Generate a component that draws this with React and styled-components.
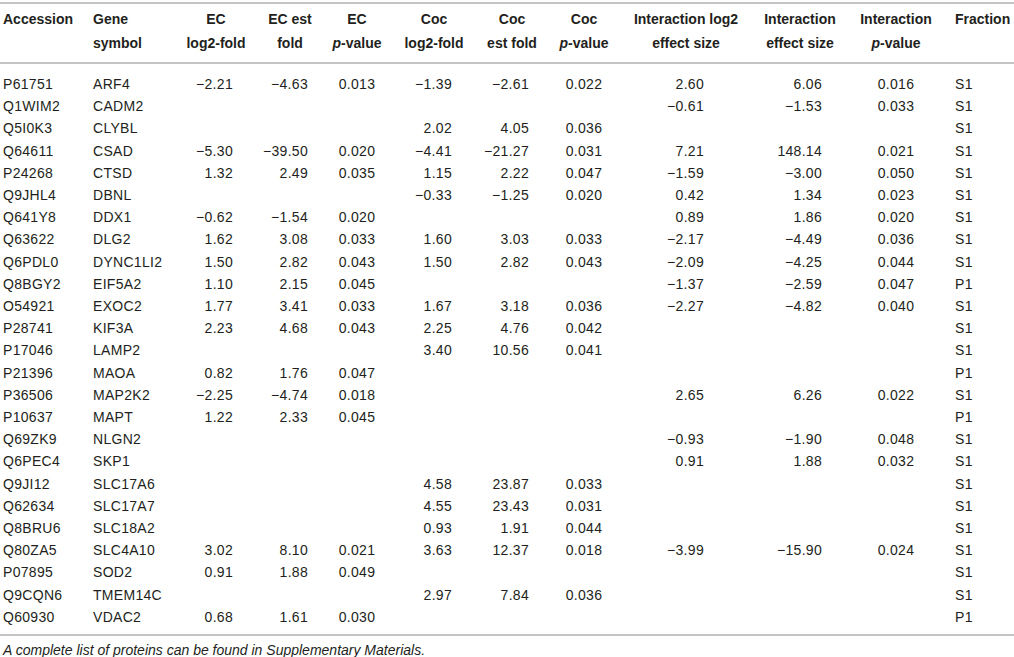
import React from 'react'
import styled, { createGlobalStyle } from 'styled-components'

const GlobalStyle = createGlobalStyle`
  html, body { margin: 0; padding: 0; background: #fff; }
  body { font-family: "Liberation Sans", Arial, sans-serif; color: #231f20; }
`

// width, alignment and padding of every column
const columns = [
  { w: 88, align: 'left', pl: 3 },
  { w: 91, align: 'left', pl: 5 },
  { w: 74, align: 'right', pr: 20 },
  { w: 74, align: 'right', pr: 19 },
  { w: 60, align: 'center' },
  { w: 94, align: 'right', pr: 29 },
  { w: 62, align: 'right', pr: 14 },
  { w: 82, align: 'center' },
  { w: 122, align: 'right', pr: 43 },
  { w: 106, align: 'right', pr: 31 },
  { w: 86, align: 'center' },
  { w: 75, align: 'left', pl: 16 },
]

const P = () => <i>p</i>

const headers = [
  ['Accession'],
  ['Gene', 'symbol'],
  ['EC', 'log2-fold'],
  ['EC est', 'fold'],
  ['EC', <><P />-value</>],
  ['Coc', 'log2-fold'],
  ['Coc', 'est fold'],
  ['Coc', <><P />-value</>],
  ['Interaction log2', 'effect size'],
  ['Interaction', 'effect size'],
  ['Interaction', <><P />-value</>],
  ['Fraction'],
]

const rows = `P61751 ARF4 −2.21 −4.63 0.013 −1.39 −2.61 0.022 2.60 6.06 0.016 S1
Q1WIM2 CADM2 _ _ _ _ _ _ −0.61 −1.53 0.033 S1
Q5I0K3 CLYBL _ _ _ 2.02 4.05 0.036 _ _ _ S1
Q64611 CSAD −5.30 −39.50 0.020 −4.41 −21.27 0.031 7.21 148.14 0.021 S1
P24268 CTSD 1.32 2.49 0.035 1.15 2.22 0.047 −1.59 −3.00 0.050 S1
Q9JHL4 DBNL _ _ _ −0.33 −1.25 0.020 0.42 1.34 0.023 S1
Q641Y8 DDX1 −0.62 −1.54 0.020 _ _ _ 0.89 1.86 0.020 S1
Q63622 DLG2 1.62 3.08 0.033 1.60 3.03 0.033 −2.17 −4.49 0.036 S1
Q6PDL0 DYNC1LI2 1.50 2.82 0.043 1.50 2.82 0.043 −2.09 −4.25 0.044 S1
Q8BGY2 EIF5A2 1.10 2.15 0.045 _ _ _ −1.37 −2.59 0.047 P1
O54921 EXOC2 1.77 3.41 0.033 1.67 3.18 0.036 −2.27 −4.82 0.040 S1
P28741 KIF3A 2.23 4.68 0.043 2.25 4.76 0.042 _ _ _ S1
P17046 LAMP2 _ _ _ 3.40 10.56 0.041 _ _ _ S1
P21396 MAOA 0.82 1.76 0.047 _ _ _ _ _ _ P1
P36506 MAP2K2 −2.25 −4.74 0.018 _ _ _ 2.65 6.26 0.022 S1
P10637 MAPT 1.22 2.33 0.045 _ _ _ _ _ _ P1
Q69ZK9 NLGN2 _ _ _ _ _ _ −0.93 −1.90 0.048 S1
Q6PEC4 SKP1 _ _ _ _ _ _ 0.91 1.88 0.032 S1
Q9JI12 SLC17A6 _ _ _ 4.58 23.87 0.033 _ _ _ S1
Q62634 SLC17A7 _ _ _ 4.55 23.43 0.031 _ _ _ S1
Q8BRU6 SLC18A2 _ _ _ 0.93 1.91 0.044 _ _ _ S1
Q80ZA5 SLC4A10 3.02 8.10 0.021 3.63 12.37 0.018 −3.99 −15.90 0.024 S1
P07895 SOD2 0.91 1.88 0.049 _ _ _ _ _ _ S1
Q9CQN6 TMEM14C _ _ _ 2.97 7.84 0.036 _ _ _ S1
Q60930 VDAC2 0.68 1.61 0.030 _ _ _ _ _ _ P1`
  .split('\n')
  .map((line) => line.split(' ').map((v) => (v === '_' ? '' : v)))

const App = () => {
  return (
    <>
      <GlobalStyle />
      <Wrap>
        <Table>
          <colgroup>
            {columns.map((c, i) => (
              <col key={i} style={{ width: c.w }} />
            ))}
          </colgroup>
          <thead>
            <tr>
              {headers.map((h, i) => (
                <Th key={i} $align={columns[i].align === 'left' ? 'left' : 'center'} $pl={columns[i].pl}>
                  {h.map((line, j) => (
                    <HeadLine key={j}>{line}</HeadLine>
                  ))}
                </Th>
              ))}
            </tr>
          </thead>
          <tbody>
            {rows.map((r, ri) => (
              <Row key={ri} $first={ri === 0} $last={ri === rows.length - 1}>
                {r.map((v, ci) => (
                  <Td key={ci} $align={columns[ci].align} $pl={columns[ci].pl} $pr={columns[ci].pr}>
                    {v}
                  </Td>
                ))}
              </Row>
            ))}
          </tbody>
        </Table>
        <Note>A complete list of proteins can be found in Supplementary Materials.</Note>
      </Wrap>
    </>
  )
}

export default App

const Wrap = styled.div`
  width: 1014px;
  padding-top: 2px;
`
const Table = styled.table`
  width: 1014px;
  table-layout: fixed;
  border-collapse: collapse;
  border-top: 2px solid #c4c4c4;
  border-bottom: 2px solid #c4c4c4;
`
const Th = styled.th`
  text-align: ${(p) => p.$align};
  vertical-align: top;
  padding: 3px 0 7px ${(p) => p.$pl || 0}px;
  font-size: 14px;
  font-weight: 700;
  white-space: nowrap;
  border-bottom: 2px solid #c4c4c4;
  i { font-style: italic; }
`
const HeadLine = styled.div`
  line-height: 24px;
`
const Row = styled.tr`
  td {
    padding-top: ${(p) => (p.$first ? 9 : 0)}px;
    padding-bottom: ${(p) => (p.$last ? 6 : 0)}px;
  }
`
const Td = styled.td`
  text-align: ${(p) => p.$align};
  padding-left: ${(p) => p.$pl || 0}px;
  padding-right: ${(p) => p.$pr || 0}px;
  height: 22.2px;
  line-height: 22.2px;
  font-size: 14px;
  white-space: nowrap;
  letter-spacing: 0.3px;
`
const Note = styled.div`
  padding: 6px 0 0 3px;
  font-size: 14px;
  font-style: italic;
  line-height: 16px;
`
